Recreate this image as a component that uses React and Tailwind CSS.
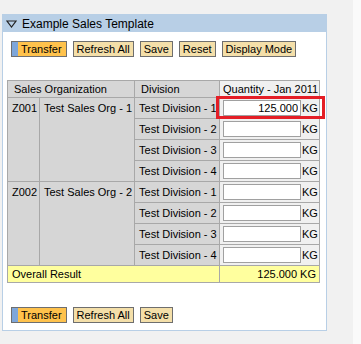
import React from "react";

const ROWS = [
  { code: "Z001", org: "Test Sales Org - 1", qty: ["125.000", "", "", ""] },
  { code: "Z002", org: "Test Sales Org - 2", qty: ["", "", "", ""] },
];

function Btn({ children, primary }) {
  if (primary) {
    return (
      <button className="flex h-[16px] items-stretch border border-[#6e6e6e] bg-[#ffc24c] text-[11px] leading-none text-black">
        <span className="w-[6px] bg-[#7ea6d9]" />
        <span className="flex items-center pl-[3px] pr-[4px]">{children}</span>
      </button>
    );
  }
  return (
    <button className="flex h-[16px] items-center border border-[#6e6e6e] bg-[#f4dfa9] px-[3px] text-[11px] leading-none text-black">
      {children}
    </button>
  );
}

function Toolbar({ full }) {
  return (
    <div className="flex gap-[6px]">
      <Btn primary>Transfer</Btn>
      <Btn>Refresh All</Btn>
      <Btn>Save</Btn>
      {full && <Btn>Reset</Btn>}
      {full && <Btn>Display Mode</Btn>}
    </div>
  );
}

export default function App() {
  const cell = "border border-[#a8a8a8] whitespace-nowrap";
  return (
    <div
      className="relative flex h-[344px] w-[361px] bg-[#f1f1f1] text-black"
      style={{ fontFamily: '"Liberation Sans", Arial, sans-serif' }}
    >
      <div className="w-[353px]">
        <div className="ml-[2px] mt-[14px] h-[317px] w-[325px] border border-[#b8cfe6] bg-white">
          <div className="flex h-[17px] items-center gap-[5px] bg-[#b8cfe6] pl-[3px] text-[12px]">
            <svg width="11" height="8" viewBox="0 0 11 8">
              <polygon points="1,1 10,1 5.5,7" fill="none" stroke="#222" strokeWidth="1.2" />
            </svg>
            <span>Example Sales Template</span>
          </div>
          <div className="pl-[8px] pt-[9px]">
            <Toolbar full />
          </div>
          <div className="pl-[4px] pt-[23px]">
            <table className="w-[312px] table-fixed border-collapse text-[11px] leading-none">
              <colgroup>
                <col className="w-[32px]" />
                <col className="w-[95px]" />
                <col className="w-[85px]" />
                <col className="w-[100px]" />
              </colgroup>
              <thead>
                <tr className="h-[17px]">
                  <th colSpan={2} className={`${cell} bg-[#d6d6d6] pl-[6px] text-left font-normal`}>
                    Sales Organization
                  </th>
                  <th className={`${cell} bg-[#d6d6d6] pl-[6px] text-left font-normal`}>Division</th>
                  <th className={`${cell} bg-[#f0f0f0] pl-[3px] text-left font-normal`}>Quantity - Jan 2011</th>
                </tr>
              </thead>
              <tbody>
                {ROWS.map((r) =>
                  r.qty.map((q, i) => (
                    <tr key={r.code + i} className="h-[21px]">
                      {i === 0 && (
                        <>
                          <td rowSpan={4} className={`${cell} bg-[#d6d6d6] px-[4px] align-top`}>
                            <div className="flex h-[20px] items-center">{r.code}</div>
                          </td>
                          <td rowSpan={4} className={`${cell} bg-[#d6d6d6] px-[4px] align-top`}>
                            <div className="flex h-[20px] items-center">{r.org}</div>
                          </td>
                        </>
                      )}
                      <td className={`${cell} bg-[#d6d6d6] px-[4px]`}>Test Division - {i + 1}</td>
                      <td className={`${cell} bg-[#f0f0f0] pl-[3px]`}>
                        <div className="flex items-center">
                          <input
                            readOnly
                            value={q}
                            className="h-[16px] w-[78px] border border-[#a0a0a0] bg-white px-[2px] text-right text-[11px] outline-none"
                          />
                          <span className="ml-[1px]">KG</span>
                        </div>
                      </td>
                    </tr>
                  ))
                )}
                <tr className="h-[17px] bg-[#ffff9e]">
                  <td colSpan={3} className={`${cell} px-[4px]`}>Overall Result</td>
                  <td className={`${cell} pr-[3px] text-right`}>125.000 KG</td>
                </tr>
              </tbody>
            </table>
          </div>
          <div className="pl-[8px] pt-[24px]">
            <Toolbar />
          </div>
        </div>
      </div>
      <div className="flex-1 bg-[#fafafa]" />
      <div className="absolute left-[216px] top-[96px] h-[23px] w-[109px] border-[3px] border-[#e41e26]" />
    </div>
  );
}
